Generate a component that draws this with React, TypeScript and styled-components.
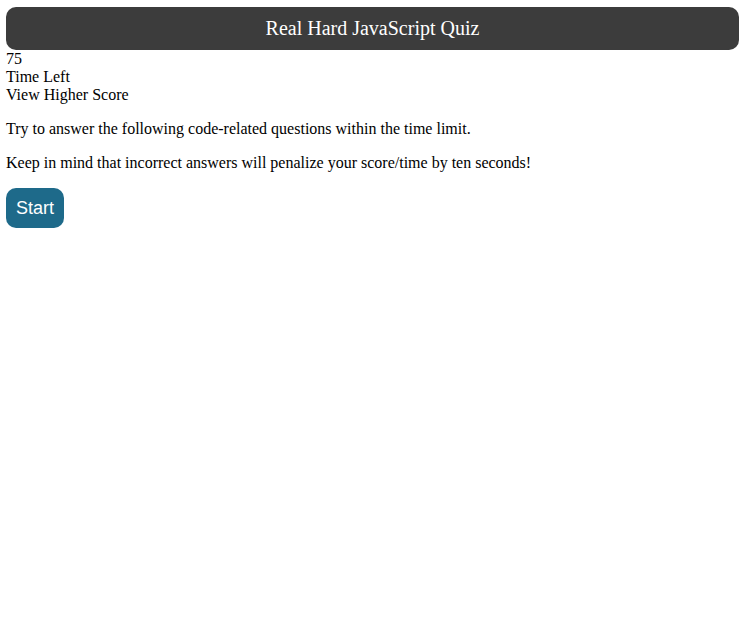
import styled, { createGlobalStyle } from 'styled-components';

const GlobalStyle = createGlobalStyle`
  body {
    margin: 0;
    padding: 7px 6px;
    background: #ffffff;
    color: #000000;
    font-family: 'Liberation Serif', 'Times New Roman', serif;
    font-size: 16px;
    line-height: 18px;
  }
`;

export default function App() {
  return (
    <>
      <GlobalStyle />
      <Header>Real Hard JavaScript Quiz</Header>
      <Stats>
        <div>75</div>
        <div>Time Left</div>
        <div>View Higher Score</div>
      </Stats>
      <Intro>
        <Para>Try to answer the following code-related questions within the time limit.</Para>
        <Para>Keep in mind that incorrect answers will penalize your score/time by ten seconds!</Para>
      </Intro>
      <StartButton>Start</StartButton>
    </>
  );
}

const Header = styled.header`
  background-color: #3c3c3c;
  color: #ffffff;
  border-radius: 10px;
  text-align: center;
  font-size: 20px;
  line-height: 23px;
  padding: 10px;
`;

const Stats = styled.div`
  display: flex;
  flex-direction: column;
`;

const Intro = styled.div`
  padding: 16px 0;
  display: flex;
  flex-direction: column;
  gap: 16px;
`;

const Para = styled.p`
  margin: 0;
`;

const StartButton = styled.button`
  background-color: #1e6a8a;
  color: #ffffff;
  border: none;
  border-radius: 10px;
  font-family: 'Liberation Sans', Arial, sans-serif;
  font-size: 18px;
  line-height: 20px;
  padding: 10px 10px;
  cursor: pointer;
`;
